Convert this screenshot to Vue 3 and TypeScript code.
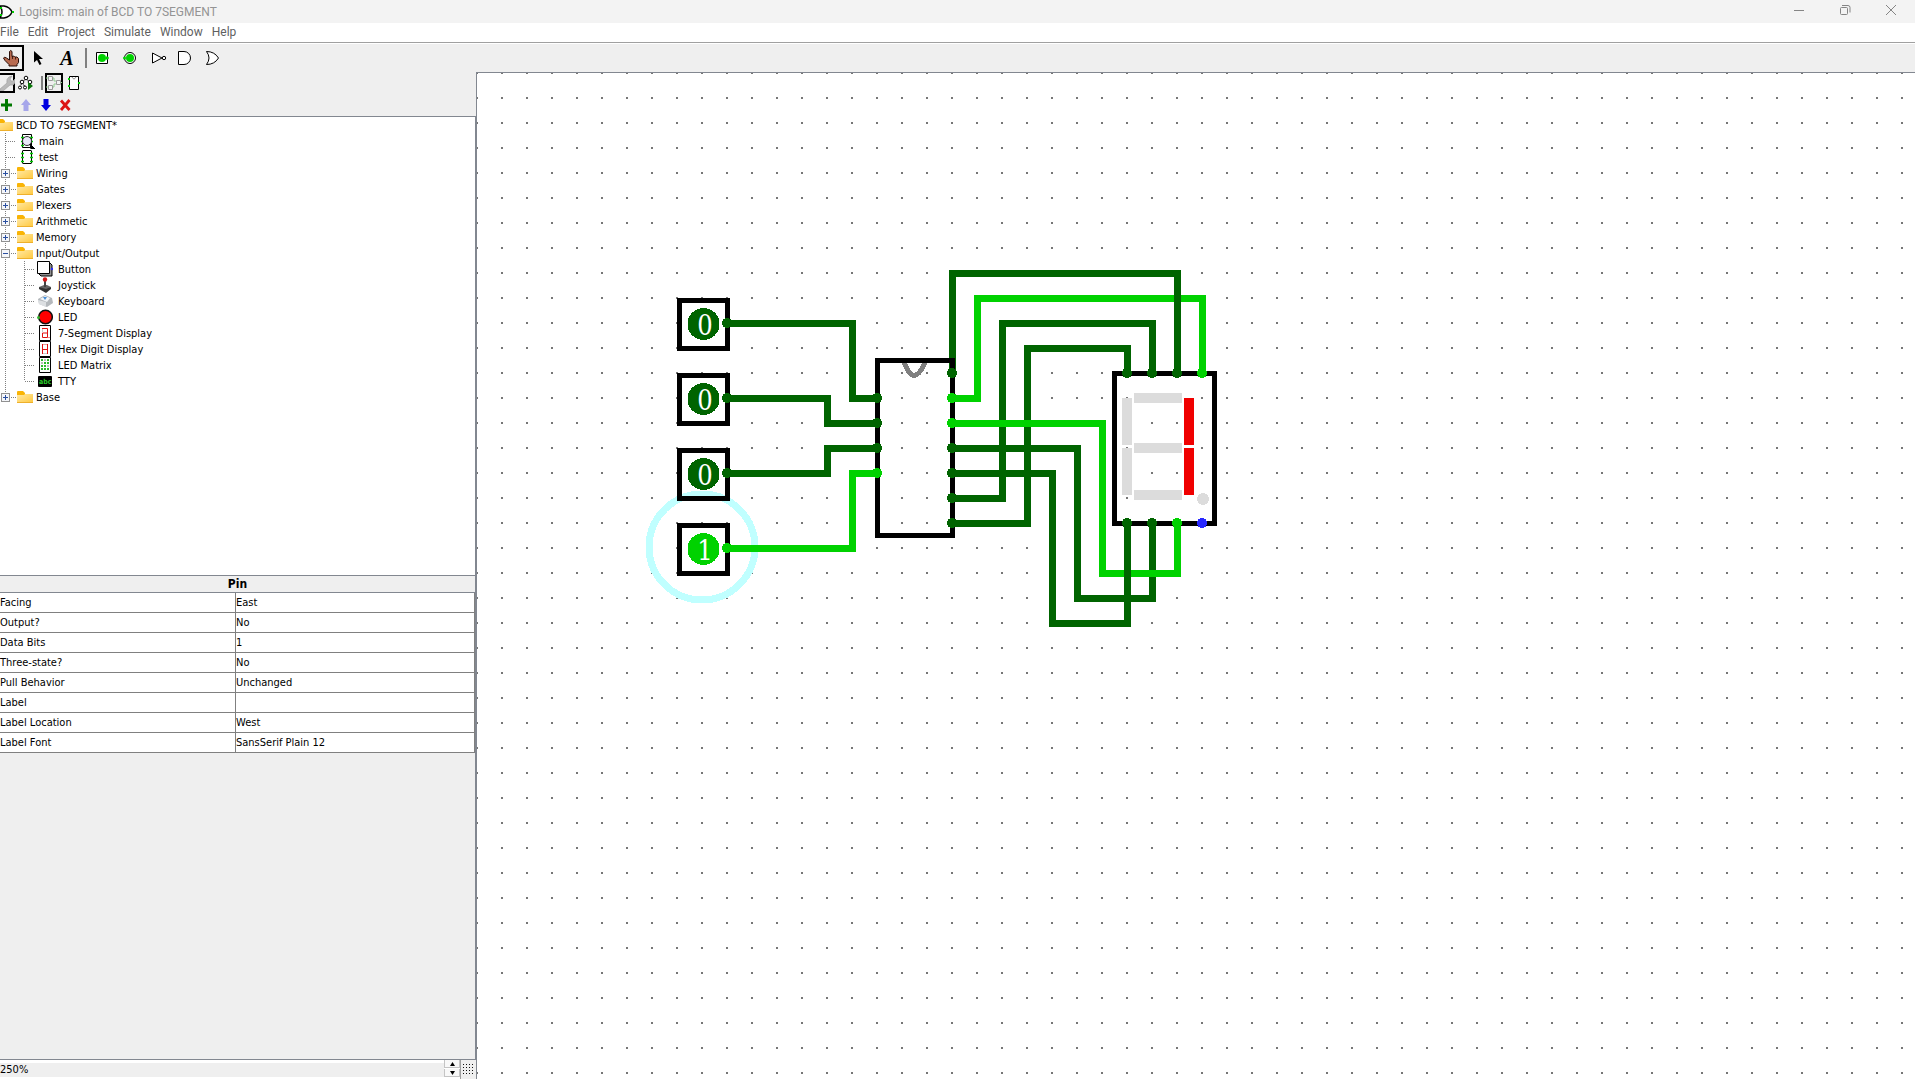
<script setup lang="ts">
import { ref } from 'vue'

const GRID = 25
const LOW = '#006400'
const HIGH = '#00d200'

type Point = [number, number]
interface Wire { on: boolean; points: Point[] }

const menus = ['File', 'Edit', 'Project', 'Simulate', 'Window', 'Help']

const gateTools = [
  { icon: 'pin-in', label: 'Add input pin' },
  { icon: 'pin-out', label: 'Add output pin' },
  { icon: 'not', label: 'Add NOT gate' },
  { icon: 'and', label: 'Add AND gate' },
  { icon: 'or', label: 'Add OR gate' },
]

const editTools = [
  { icon: 'plus', label: 'Add circuit' },
  { icon: 'up', label: 'Move up' },
  { icon: 'down', label: 'Move down' },
  { icon: 'remove', label: 'Remove circuit' },
]

const circuits = [
  { name: 'main', icon: 'circuit-open' },
  { name: 'test', icon: 'circuit' },
]

const ioParts = [
  { name: 'Button', icon: 'button' },
  { name: 'Joystick', icon: 'joystick' },
  { name: 'Keyboard', icon: 'keyboard' },
  { name: 'LED', icon: 'led' },
  { name: '7-Segment Display', icon: 'seven' },
  { name: 'Hex Digit Display', icon: 'hex' },
  { name: 'LED Matrix', icon: 'matrix' },
  { name: 'TTY', icon: 'tty' },
]

const libraries = [
  { name: 'Wiring', parts: [] },
  { name: 'Gates', parts: [] },
  { name: 'Plexers', parts: [] },
  { name: 'Arithmetic', parts: [] },
  { name: 'Memory', parts: [] },
  { name: 'Input/Output', parts: ioParts },
  { name: 'Base', parts: [] },
]

const attributes = [
  ['Facing', 'East'],
  ['Output?', 'No'],
  ['Data Bits', '1'],
  ['Three-state?', 'No'],
  ['Pull Behavior', 'Unchanged'],
  ['Label', ''],
  ['Label Location', 'West'],
  ['Label Font', 'SansSerif Plain 12'],
]

const zoom = ref('250%')

const pins = [
  { row: 10, value: 0 },
  { row: 13, value: 0 },
  { row: 16, value: 0 },
  { row: 19, value: 1 },
]

const wires: Wire[] = [
  { on: false, points: [[10, 10], [15, 10], [15, 13], [16, 13]] },
  { on: false, points: [[10, 13], [14, 13], [14, 14], [16, 14]] },
  { on: false, points: [[10, 16], [14, 16], [14, 15], [16, 15]] },
  { on: true, points: [[10, 19], [15, 19], [15, 16], [16, 16]] },
  { on: false, points: [[19, 17], [21, 17], [21, 10], [27, 10], [27, 12]] },
  { on: false, points: [[19, 18], [22, 18], [22, 11], [26, 11], [26, 12]] },
  { on: false, points: [[19, 15], [24, 15], [24, 21], [27, 21], [27, 18]] },
  { on: true, points: [[19, 13], [20, 13], [20, 9], [29, 9], [29, 12]] },
  { on: true, points: [[19, 14], [25, 14], [25, 20], [28, 20], [28, 18]] },
  { on: false, points: [[19, 16], [23, 16], [23, 22], [26, 22], [26, 18]] },
  { on: false, points: [[19, 12], [19, 8], [28, 8], [28, 12]] },
]

const segments = [
  { x: 657, y: 320, w: 48, h: 10, lit: false },
  { x: 657, y: 370, w: 48, h: 10, lit: false },
  { x: 657, y: 417, w: 48, h: 10, lit: false },
  { x: 645, y: 325, w: 10, h: 47, lit: false },
  { x: 645, y: 375, w: 10, h: 47, lit: false },
  { x: 707, y: 325, w: 10, h: 47, lit: true },
  { x: 707, y: 375, w: 10, h: 47, lit: true },
]

const wireColor = (on: boolean) => (on ? HIGH : LOW)
const toPixels = (points: Point[]) => points.map(([x, y]) => `${x * GRID},${y * GRID}`).join(' ')

const ports = wires.flatMap((w) =>
  [w.points[0], w.points[w.points.length - 1]].map(([x, y]) => ({
    x: x * GRID,
    y: y * GRID,
    color: wireColor(w.on),
  })),
)
ports.push({ x: 29 * GRID, y: 18 * GRID, color: '#2828ff' })
</script>

<template>
  <div class="app">
    <svg class="sprite" aria-hidden="true">
      <defs>
        <linearGradient id="folder-fill" x1="0" y1="0" x2="1" y2="1">
          <stop offset="0" stop-color="#ffe9a6" />
          <stop offset="1" stop-color="#ffc83d" />
        </linearGradient>
        <symbol id="i-logo" viewBox="0 0 14 16">
          <path d="M0 2h4q6 1 8 6q-2 5-8 6H0q4-6 0-12z" fill="#fff" stroke="#000" stroke-width="1.5" />
          <path d="M0 4h2M0 11h2M12 8h2" stroke="#00c800" stroke-width="2" />
        </symbol>
        <symbol id="i-poke" viewBox="0 0 20 20">
          <path d="M8.500 3.500q1-2 2.500 0v5l1-.5 1.500.5 1 .5 1.500 0 1.500 1.500v4l-1.500 2v1.500H8v-1.500l-4-4-1.500-2.500q1-1.500 3 0l3 2z" fill="#b86b50" stroke="#2a0f08" />
          <path d="M11.500 8v3M14.500 9v2.500" stroke="#2a0f08" stroke-width=".8" />
        </symbol>
        <symbol id="i-select" viewBox="0 0 20 20">
          <path d="M6 3v11.500l3-2.500 2.500 5 2-1-2.500-5h4z" fill="#000" />
        </symbol>
        <symbol id="i-pin-in" viewBox="0 0 20 20">
          <path d="M4.500 4.500h11v11h-11z" fill="#fff" stroke="#000" />
          <circle cx="10" cy="10" r="4" fill="#00d200" />
          <path d="M14 8.500h2l1 1.500-1 1.500h-2z" fill="#00d200" />
        </symbol>
        <symbol id="i-pin-out" viewBox="0 0 20 20">
          <circle cx="10" cy="10" r="5.500" fill="#fff" stroke="#000" />
          <circle cx="10" cy="10" r="4" fill="#00d200" />
          <circle cx="4.500" cy="10" r="1.500" fill="#00d200" />
        </symbol>
        <symbol id="i-not" viewBox="0 0 20 20">
          <path d="M4.500 5v10L14 10z" fill="#fff" stroke="#000" />
          <circle cx="16" cy="10" r="1.700" fill="#fff" stroke="#000" />
        </symbol>
        <symbol id="i-and" viewBox="0 0 20 20">
          <path d="M2.500 3.500H8a6.500 6.500 0 0 1 0 13H2.500z" fill="#fff" stroke="#000" />
        </symbol>
        <symbol id="i-or" viewBox="0 0 20 20">
          <path d="M2.500 3.500q8 0 12 6.500-4 6.500-12 6.500 5-6.500 0-13z" fill="#fff" stroke="#000" />
        </symbol>
        <symbol id="i-wrench" viewBox="0 0 16 16">
          <path d="M1 14l7-6q-1-4 2-6l3-1-2 3 1 2 2 0 2-2q1 4-2 6l-3 0-7 6q-3 1-3-2z" fill="#b9b9b9" stroke="#a4a4a4" stroke-width=".7" />
        </symbol>
        <symbol id="i-hierarchy" viewBox="0 0 16 16">
          <path d="M8 4L4 7 2 13M4 7l3 5M8 4l4 3v5" fill="none" stroke="#000" stroke-dasharray="2 1" />
          <g fill="#fff" stroke="#000">
            <circle cx="8" cy="3" r="1.800" /><circle cx="4" cy="7" r="1.800" /><circle cx="12" cy="7" r="1.800" />
            <circle cx="2" cy="12.500" r="1.500" /><circle cx="7" cy="12.500" r="1.500" />
          </g>
          <path d="M10 7v8l5-4z" fill="#0a780a" />
        </symbol>
        <symbol id="i-layout" viewBox="0 0 16 16">
          <path d="M0 3h2M0 12h2M6 3h2v3h2M6 12h2v-3h2M14 7.500h2" fill="none" stroke="#8fce8f" />
          <g fill="#f4f4f4" stroke="#9a9a9a">
            <path d="M2.500 1.500h4v4h-4zM2.500 10.500h4v4h-4zM10.500 5.500h4v4h-4z" />
          </g>
        </symbol>
        <symbol id="i-chip" viewBox="0 0 16 16">
          <path d="M3.500 1.500h9v13h-9z" fill="#fff" stroke="#000" />
          <path d="M6 2q2 4 4 0" fill="none" stroke="#909090" />
          <path d="M2 4h2M2 11h2M12 8h2" stroke="#00d200" stroke-width="2" />
        </symbol>
        <symbol id="i-plus" viewBox="0 0 16 16">
          <path d="M7 2h3v4.500h4v3h-4V14H7V9.500H3v-3h4z" fill="#007800" />
        </symbol>
        <symbol id="i-up" viewBox="0 0 16 16">
          <path d="M8 2l5 6h-2.500v6h-5V8H3z" fill="#a6a6ea" />
        </symbol>
        <symbol id="i-down" viewBox="0 0 16 16">
          <path d="M8 14l5-6h-2.500V2h-5v6H3z" fill="#0000e0" />
        </symbol>
        <symbol id="i-remove" viewBox="0 0 16 16">
          <path d="M3 3.500l8.500 9.500M11.500 3L3 13" stroke="#dc1414" stroke-width="2.800" />
        </symbol>
        <symbol id="i-folder" viewBox="0 0 16 16">
          <path d="M0 3q0-1 1-1h5l2 2v4H0z" fill="#f9b406" />
          <path d="M0 6h7l1-1h8v8q0 1-1 1H1q-1 0-1-1z" fill="url(#folder-fill)" />
          <path d="M0 13.500h16" stroke="#eeb02c" />
        </symbol>
        <symbol id="i-circuit" viewBox="0 0 16 16">
          <path d="M3.500 1.500h9v13h-9z" fill="#fff" stroke="#000" stroke-dasharray="9 13 9 13" />
          <path d="M3.500 2v12M12.500 2v12" stroke="#000" />
          <path d="M2 4.500h3M2 8.500h3M2 12.500h3M11 4.500h3M11 8.500h3M11 12.500h3" stroke="#00c800" stroke-width="1.500" />
        </symbol>
        <symbol id="i-circuit-open" viewBox="0 0 16 16">
          <path d="M3.500 1.500h9v13h-9z" fill="#fff" stroke="#000" />
          <path d="M2 4.500h3M2 8.500h3M2 12.500h3M11 4.500h3M11 8.500h3" stroke="#00c800" stroke-width="1.500" />
          <circle cx="8" cy="8" r="4.500" fill="#e8e8f8" stroke="#303030" />
          <path d="M11 11l5 5h-4z" fill="#000" stroke="#000" />
        </symbol>
        <symbol id="i-button" viewBox="0 0 16 16">
          <path d="M12 1l3 3v11H4l-3-3z" fill="#909090" stroke="#000" />
          <path d="M.5.500h12v12H.5z" fill="#fff" stroke="#000" />
          <circle cx="15" cy="8" r="1.200" fill="#2828ff" />
        </symbol>
        <symbol id="i-joystick" viewBox="0 0 16 16">
          <path d="M2 10l5-2h3l4 2-5 5z" fill="#666" />
          <path d="M2 10l7 2 5-2v2l-5 4-7-4z" fill="#333" />
          <path d="M8 4v6" stroke="#444" stroke-width="2" />
          <circle cx="8" cy="2.500" r="2.200" fill="#d01818" />
        </symbol>
        <symbol id="i-keyboard" viewBox="0 0 16 16">
          <path d="M1 6l7-4 7 3 1 5-6 4-8-3z" fill="#b4b8bc" />
          <path d="M3 6l5-3 5 2-3 4z" fill="#f2f5f8" />
          <path d="M1 7l8 2v5l-7-3z" fill="#dcdfe2" />
          <path d="M6 4l4 0-2 3z" fill="#4a90d8" />
        </symbol>
        <symbol id="i-led" viewBox="0 0 16 16">
          <circle cx="8.500" cy="8" r="6.800" fill="#f00" stroke="#111" stroke-width="1.500" />
          <circle cx="1.500" cy="8.500" r="1.500" fill="#30b830" />
        </symbol>
        <symbol id="i-seven" viewBox="0 0 16 16">
          <path d="M2.500.500h11v15h-11z" fill="#fff" stroke="#000" />
          <path d="M5.500 4v3" stroke="#ccc" />
          <path d="M5 3.500h5.500v9h-5V8H10" fill="none" stroke="#e01010" />
          <path d="M11.500 12.500h1" stroke="#e01010" />
        </symbol>
        <symbol id="i-hex" viewBox="0 0 16 16">
          <path d="M2.500.500h11v15h-11z" fill="#fff" stroke="#000" />
          <path d="M6 12.500h4" stroke="#ccc" />
          <path d="M6 3.500h4" stroke="#e9a0a0" />
          <path d="M5.500 3v10M10.500 3v10M6 8.500h4" stroke="#e01010" />
        </symbol>
        <symbol id="i-matrix" viewBox="0 0 16 16">
          <path d="M2.500.500h11v15h-11z" fill="#fff" stroke="#000" />
          <path d="M5 2v12M8 2v12M11 2v12" stroke="#30b830" stroke-width="2" stroke-dasharray="2 1" />
          <path d="M8 2v2M5 5v2M11 8v2" stroke="#bbb" stroke-width="2" />
        </symbol>
        <symbol id="i-tty" viewBox="0 0 16 16">
          <rect x="1" y="3" width="14" height="11" rx="1" fill="#000" />
          <text x="2" y="11" font-family="DejaVu Sans Condensed, sans-serif" font-size="7" font-weight="bold" fill="#28c828">abc</text>
        </symbol>
      </defs>
    </svg>

    <header class="title-bar">
      <svg class="logo" width="14" height="16"><use href="#i-logo" /></svg>
      <h1>Logisim: main of BCD TO 7SEGMENT</h1>
      <button type="button" class="window-button" aria-label="Minimize">
        <svg width="12" height="12"><path d="M1 6.500h10" /></svg>
      </button>
      <button type="button" class="window-button" aria-label="Restore">
        <svg width="12" height="12"><path d="M3 1.500h6q2 0 2 2v5" /><rect x="1.500" y="3.500" width="7" height="7" rx="1" /></svg>
      </button>
      <button type="button" class="window-button" aria-label="Close">
        <svg width="12" height="12"><path d="M1 1l10 10M11 1L1 11" /></svg>
      </button>
    </header>

    <nav class="menu-bar" aria-label="Main menu">
      <button v-for="menu in menus" :key="menu" type="button">{{ menu }}</button>
    </nav>

    <div class="toolbar" role="toolbar" aria-label="Tools">
      <button type="button" class="tool tool-selected" aria-label="Poke tool">
        <svg width="20" height="20"><use href="#i-poke" /></svg>
      </button>
      <button type="button" class="tool" aria-label="Edit tool">
        <svg width="20" height="20"><use href="#i-select" /></svg>
      </button>
      <button type="button" class="tool tool-text">A</button>
      <span class="separator"></span>
      <button v-for="tool in gateTools" :key="tool.icon" type="button" class="tool" :aria-label="tool.label">
        <svg width="20" height="20"><use :href="`#i-${tool.icon}`" /></svg>
      </button>
    </div>

    <main class="workspace">
      <aside class="side">
        <div class="small-toolbar view-toolbar">
          <button type="button" class="small-tool framed" aria-label="Show projects">
            <svg width="16" height="16"><use href="#i-wrench" /></svg>
          </button>
          <button type="button" class="small-tool" aria-label="Show simulation">
            <svg width="16" height="16"><use href="#i-hierarchy" /></svg>
          </button>
          <span class="separator small-separator"></span>
          <button type="button" class="small-tool framed" aria-label="Edit layout">
            <svg width="16" height="16"><use href="#i-layout" /></svg>
          </button>
          <button type="button" class="small-tool" aria-label="Edit appearance">
            <svg width="16" height="16"><use href="#i-chip" /></svg>
          </button>
        </div>
        <div class="small-toolbar edit-toolbar">
          <button v-for="tool in editTools" :key="tool.icon" type="button" class="small-tool" :aria-label="tool.label">
            <svg width="16" height="16"><use :href="`#i-${tool.icon}`" /></svg>
          </button>
        </div>

        <section class="tree" aria-label="Project explorer">
          <div class="row root">
            <svg class="icon" width="16" height="16"><use href="#i-folder" /></svg>
            <span>BCD TO 7SEGMENT*</span>
          </div>
          <ul>
            <li v-for="circuit in circuits" :key="circuit.name">
              <div class="row circuit guide">
                <i class="dash"></i>
                <svg class="icon" width="16" height="16"><use :href="`#i-${circuit.icon}`" /></svg>
                <span>{{ circuit.name }}</span>
              </div>
            </li>
            <li v-for="(lib, i) in libraries" :key="lib.name">
              <div class="row library guide" :class="{ 'guide-end': i === libraries.length - 1 }">
                <button type="button" class="toggle" :aria-label="`Toggle ${lib.name}`">
                  <svg width="7" height="7"><path :d="lib.parts.length ? 'M1 3.500h5' : 'M1 3.500h5M3.500 1v5'" /></svg>
                </button>
                <i class="dash"></i>
                <svg class="icon" width="16" height="16"><use href="#i-folder" /></svg>
                <span>{{ lib.name }}</span>
              </div>
              <ul v-if="lib.parts.length" class="guide">
                <li
                  v-for="(part, j) in lib.parts"
                  :key="part.name"
                  class="row part"
                  :class="{ 'part-end': j === lib.parts.length - 1 }"
                >
                  <i class="dash"></i>
                  <svg class="icon" width="16" height="16"><use :href="`#i-${part.icon}`" /></svg>
                  <span>{{ part.name }}</span>
                </li>
              </ul>
            </li>
          </ul>
        </section>

        <section class="attributes">
          <h2>Pin</h2>
          <table>
            <tbody>
              <tr v-for="[name, value] in attributes" :key="name">
                <th scope="row">{{ name }}</th>
                <td>{{ value }}</td>
              </tr>
            </tbody>
          </table>
        </section>

        <footer class="status">
          <input v-model="zoom" type="text" aria-label="Zoom" />
          <div class="spinner">
            <button type="button" aria-label="Zoom in"><svg width="7" height="4"><path d="M1 4l2.500-4L6 4z" /></svg></button>
            <button type="button" aria-label="Zoom out"><svg width="7" height="4"><path d="M1 0l2.500 4L6 0z" /></svg></button>
          </div>
          <button type="button" class="grid-button" aria-label="Show grid">
            <svg width="11" height="11" shape-rendering="crispEdges">
              <path d="M0 .5h11M0 3.500h11M0 6.500h11M0 9.500h11" stroke="#111" stroke-dasharray="1 2" />
            </svg>
          </button>
        </footer>
      </aside>

      <section class="canvas" aria-label="Circuit">
        <svg width="100%" height="100%" shape-rendering="crispEdges">
          <defs>
            <pattern id="dots" x="-1" y="-1" :width="GRID" :height="GRID" patternUnits="userSpaceOnUse">
              <rect width="2" height="2" fill="#767676" />
            </pattern>
          </defs>
          <rect width="100%" height="100%" fill="url(#dots)" />

          <circle cx="225" cy="474" r="53" fill="none" stroke="#c0ffff" stroke-width="7" />

          <polyline
            v-for="(wire, i) in wires"
            :key="i"
            :points="toPixels(wire.points)"
            :stroke="wireColor(wire.on)"
            fill="none"
            stroke-width="7"
            transform="translate(.5 .5)"
          />

          <g v-for="pin in pins" :key="pin.row" :transform="`translate(0 ${pin.row * GRID})`">
            <rect x="202.500" y="-22.500" width="48" height="48" fill="none" stroke="#000" stroke-width="5" />
            <circle cx="226.500" cy="1" r="16" :fill="wireColor(pin.value === 1)" />
            <text class="pin-value" x="228" y="12">{{ pin.value }}</text>
          </g>

          <path d="M427 289Q437 316 448 289" fill="none" stroke="#808080" stroke-width="5" />
          <rect x="400.500" y="287.500" width="75" height="175" fill="none" stroke="#000" stroke-width="5" />

          <rect x="637.500" y="300.500" width="100" height="150" fill="none" stroke="#000" stroke-width="5" />
          <rect
            v-for="(s, i) in segments"
            :key="i"
            :x="s.x"
            :y="s.y"
            :width="s.w"
            :height="s.h"
            :fill="s.lit ? '#f00000' : '#dcdcdc'"
          />
          <circle cx="726" cy="426" r="6" fill="#dcdcdc" />

          <circle v-for="(p, i) in ports" :key="i" :cx="p.x" :cy="p.y" r="5" :fill="p.color" />
        </svg>
      </section>
    </main>
  </div>
</template>

<style>
body {
  overflow: hidden;
}
</style>

<style scoped>
.app {
  display: flex;
  flex-direction: column;
  height: 100vh;
  overflow: hidden;
  background: #efefef;
  color: #000;
  font: 11px/16px "DejaVu Sans Condensed", "Noto Sans", sans-serif;
}

.sprite {
  position: absolute;
  width: 0;
  height: 0;
}

button {
  margin: 0;
  padding: 0;
  border: 0;
  background: none;
  font: inherit;
  color: inherit;
}

svg {
  display: block;
  flex: none;
}

h1,
h2,
ul {
  margin: 0;
  padding: 0;
  list-style: none;
}

.title-bar {
  display: flex;
  flex: none;
  align-items: center;
  height: 23px;
  padding-right: 1px;
  background: #f3f3f3;
}

.title-bar h1 {
  flex: 1;
  margin-left: 5px;
  font: 12px/16px Roboto, sans-serif;
  color: #949494;
}

.window-button {
  display: flex;
  align-items: center;
  align-self: flex-start;
  justify-content: center;
  width: 46px;
  height: 20px;
}

.window-button svg {
  fill: none;
  stroke: #858585;
}

.menu-bar {
  display: flex;
  flex: none;
  gap: 9px;
  height: 19px;
  border-bottom: 1px solid #a0a0a0;
  background: #fff;
  font: 12px/19px Roboto, sans-serif;
  color: #5f5f5f;
}

.toolbar {
  display: flex;
  flex: none;
  align-items: center;
  height: 28px;
  border-top: 1px solid #fff;
}

.tool {
  display: flex;
  align-items: center;
  justify-content: center;
  width: 28px;
  height: 26px;
}

.tool-selected {
  width: 24px;
  border: 2px solid #000;
  border-left: 0;
}

.tool-text {
  width: 30px;
  font: italic bold 20px/26px "Liberation Serif", serif;
}

.separator {
  width: 2px;
  height: 20px;
  margin: 0 1px 0 3px;
  background: #808080;
}

.workspace {
  display: flex;
  flex: 1;
  min-height: 0;
}

.side {
  display: flex;
  flex: none;
  flex-direction: column;
  width: 476px;
}

.small-toolbar {
  display: flex;
  flex: none;
  align-items: center;
  height: 22px;
}

.small-tool {
  display: flex;
  align-items: center;
  justify-content: center;
  width: 20px;
  height: 20px;
}

.edit-toolbar {
  margin-left: -4px;
}

.view-toolbar .small-tool {
  width: 22px;
}

.view-toolbar .framed {
  width: 18px;
  border: 2px solid #000;
}

.view-toolbar .framed:first-child {
  width: 15px;
  border-left: 0;
}

.small-separator {
  height: 14px;
  margin: 0 2px 0 4px;
}

.tree {
  box-sizing: border-box;
  flex: 0 0 459px;
  overflow: hidden;
  border-top: 1px solid #828790;
  border-right: 1px solid #828790;
  background: #fff;
}

.row {
  display: flex;
  align-items: center;
  height: 16px;
  line-height: 18px;
  white-space: nowrap;
}

.row span {
  padding-top: 1px;
}

.root {
  margin-left: -3px;
}

.root .icon,
.library .icon {
  margin-right: 3px;
}

.guide {
  background: repeating-linear-gradient(#808080 0 1px, transparent 1px 2px) 5px 0 / 1px 100% no-repeat;
}

.guide-end {
  background-size: 1px 8px;
}

.dash {
  width: 6px;
  height: 1px;
  background: repeating-linear-gradient(90deg, #808080 0 1px, transparent 1px 2px);
}

.circuit {
  padding-left: 6px;
}

.circuit .dash {
  width: 10px;
}

.circuit .icon {
  margin: 0 4px 0 3px;
}

.toggle {
  display: flex;
  width: 9px;
  height: 9px;
  margin: 0 1px;
  border: 1px solid #919191;
  background: #f4f6fa;
}

.toggle svg {
  fill: none;
  stroke: #2a4fa0;
}

.part {
  padding-left: 25px;
  background: repeating-linear-gradient(#808080 0 1px, transparent 1px 2px) 24px 0 / 1px 100% no-repeat;
}

.part-end {
  background-size: 1px 8px;
}

.part .dash {
  width: 10px;
}

.part .icon {
  margin: 0 5px 0 2px;
}

.attributes {
  flex: 1;
  min-height: 0;
  border-top: 1px solid #828790;
  border-right: 1px solid #828790;
}

.attributes h2 {
  height: 16px;
  border-bottom: 1px solid #828790;
  font: bold 12px/16px "DejaVu Sans Condensed", sans-serif;
  text-align: center;
}

table {
  width: 100%;
  border-collapse: separate;
  border-spacing: 0;
  table-layout: fixed;
  background: #fff;
}

th,
td {
  box-sizing: border-box;
  height: 20px;
  padding: 0;
  border-right: 1px solid #808080;
  border-bottom: 1px solid #808080;
  font-weight: normal;
  line-height: 18px;
  text-align: left;
}

th {
  width: 236px;
}

.status {
  display: flex;
  flex: none;
  height: 19px;
  border-top: 1px solid #828790;
  background: #fff;
}

.status input {
  flex: 1;
  min-width: 0;
  height: 14px;
  margin: 3px 0 0;
  padding: 0;
  border: 0;
  background: #efefef;
  font: inherit;
}

.spinner {
  display: flex;
  flex-direction: column;
  gap: 1px;
  width: 16px;
}

.spinner button {
  display: flex;
  align-items: center;
  justify-content: center;
  height: 8px;
  border: 1px solid #c4c4c4;
  border-width: 0 1px 1px;
  background: #f8f8f8;
}

.grid-button {
  display: flex;
  align-items: center;
  justify-content: center;
  width: 16px;
  border-left: 1px solid #a0a0a0;
  background: #efefef;
}

.canvas {
  flex: 1;
  min-width: 0;
  border-top: 1px solid #828790;
  border-left: 1px solid #828790;
  background: #fff;
}

.pin-value {
  fill: #fff;
  font-family: "DejaVu Serif Condensed", "DejaVu Serif", serif;
  font-size: 27px;
  text-anchor: middle;
}
</style>
